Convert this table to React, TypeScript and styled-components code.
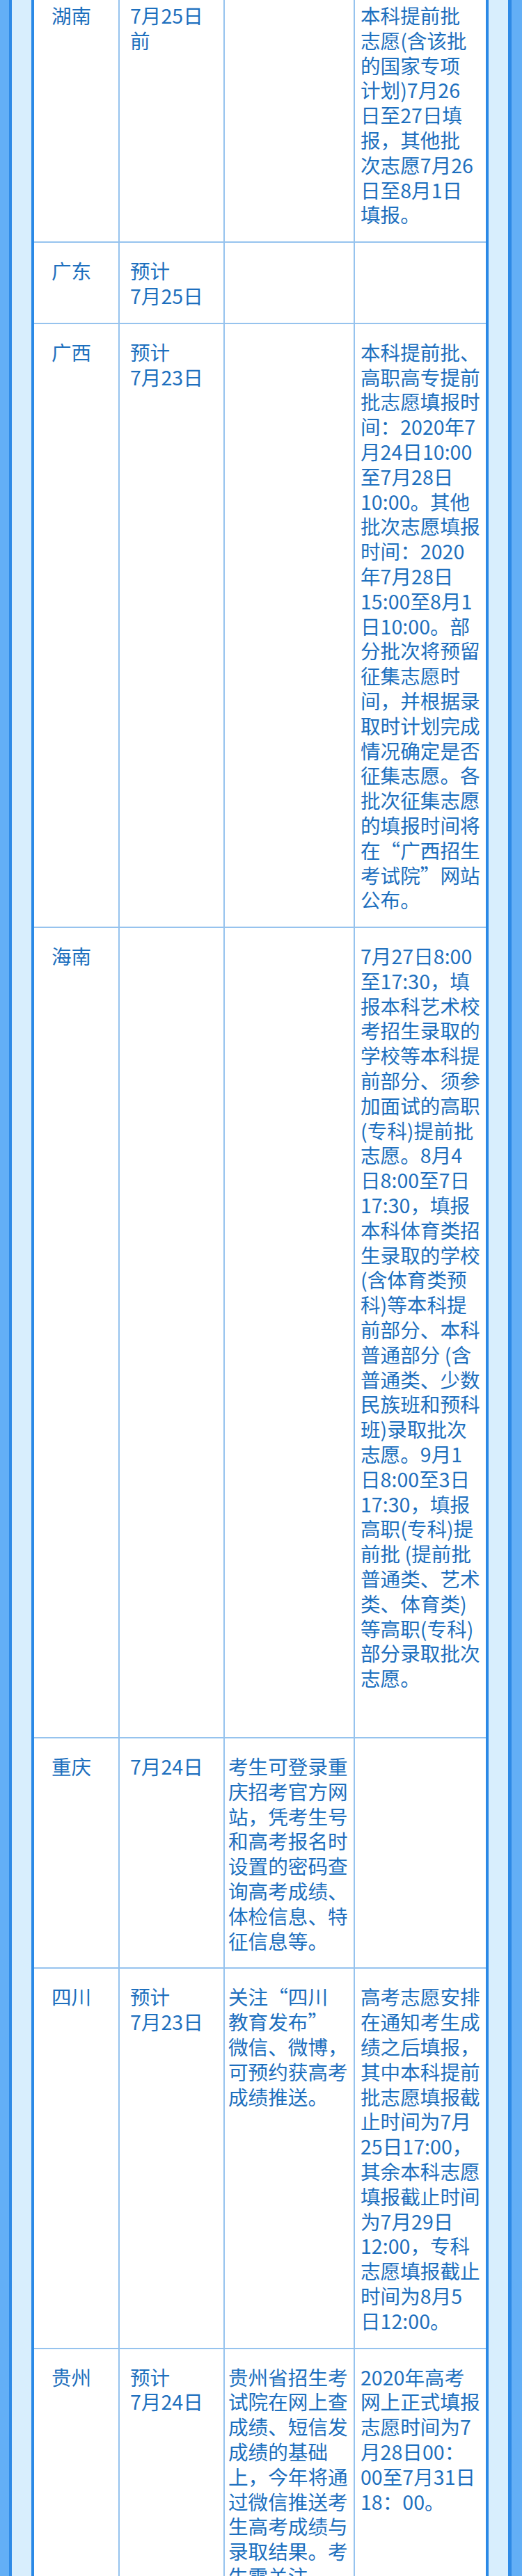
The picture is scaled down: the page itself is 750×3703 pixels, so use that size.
import React from 'react';
import styled, {createGlobalStyle} from 'styled-components';

const GlobalStyle = createGlobalStyle`
    html, body {
        margin: 0;
        padding: 0;
        overflow: hidden;
    }
    body {
        background: #63aff6;
        font-family: "Noto Sans CJK SC", "Noto Sans", sans-serif;
    }
`

type Province = {
    name: string;
    date: string[];
    query: string[];
    fill: string[];
    extraBottom?: number;
};

const provinces: Province[] = [
    {
        name: '湖南',
        date: ['7月25日', '前'],
        query: [],
        fill: ['本科提前批', '志愿(含该批', '的国家专项', '计划)7月26', '日至27日填', '报，其他批', '次志愿7月26', '日至8月1日', '填报。'],
    },
    {
        name: '广东',
        date: ['预计', '7月25日'],
        query: [],
        fill: [],
    },
    {
        name: '广西',
        date: ['预计', '7月23日'],
        query: [],
        fill: ['本科提前批、', '高职高专提前', '批志愿填报时', '间：2020年7', '月24日10:00', '至7月28日', '10:00。其他',
            '批次志愿填报', '时间：2020', '年7月28日', '15:00至8月1', '日10:00。部', '分批次将预留', '征集志愿时',
            '间，并根据录', '取时计划完成', '情况确定是否', '征集志愿。各', '批次征集志愿', '的填报时间将',
            '在“广西招生', '考试院”网站', '公布。'],
    },
    {
        name: '海南',
        date: [],
        query: [],
        fill: ['7月27日8:00', '至17:30，填', '报本科艺术校', '考招生录取的', '学校等本科提', '前部分、须参',
            '加面试的高职', '(专科)提前批', '志愿。8月4', '日8:00至7日', '17:30，填报', '本科体育类招',
            '生录取的学校', '(含体育类预', '科)等本科提', '前部分、本科', '普通部分 (含', '普通类、少数',
            '民族班和预科', '班)录取批次', '志愿。9月1', '日8:00至3日', '17:30，填报', '高职(专科)提',
            '前批 (提前批', '普通类、艺术', '类、体育类)', '等高职(专科)', '部分录取批次', '志愿。'],
        extraBottom: 46,
    },
    {
        name: '重庆',
        date: ['7月24日'],
        query: ['考生可登录重', '庆招考官方网', '站，凭考生号', '和高考报名时', '设置的密码查', '询高考成绩、',
            '体检信息、特', '征信息等。'],
        fill: [],
    },
    {
        name: '四川',
        date: ['预计', '7月23日'],
        query: ['关注“四川', '教育发布”', '微信、微博，', '可预约获高考', '成绩推送。'],
        fill: ['高考志愿安排', '在通知考生成', '绩之后填报，', '其中本科提前', '批志愿填报截', '止时间为7月',
            '25日17:00，', '其余本科志愿', '填报截止时间', '为7月29日', '12:00，专科', '志愿填报截止',
            '时间为8月5', '日12:00。'],
    },
    {
        name: '贵州',
        date: ['预计', '7月24日'],
        query: ['贵州省招生考', '试院在网上查', '成绩、短信发', '成绩的基础', '上，今年将通', '过微信推送考',
            '生高考成绩与', '录取结果。考', '生需关注', '“贵州招生考', '试院”微信', '公众号。'],
        fill: ['2020年高考', '网上正式填报', '志愿时间为7', '月28日00：', '00至7月31日', '18：00。'],
    },
];

const Lines: React.FC<{ lines: string[] }> = ({lines}) => (
    <>
        {lines.map((line, i) => <Line key={i}>{line}</Line>)}
    </>
);

export default function App() {
    return <Page lang="zh-CN">
        <GlobalStyle/>
        <Frame>
            <Table>
                {provinces.map((p) => (
                    <Row key={p.name} $extraBottom={p.extraBottom ?? 0}>
                        <Cell $indent={25}><Line>{p.name}</Line></Cell>
                        <Cell $indent={15}><Lines lines={p.date}/></Cell>
                        <Cell $indent={5}><Lines lines={p.query}/></Cell>
                        <Cell $indent={8}><Lines lines={p.fill}/></Cell>
                    </Row>
                ))}
            </Table>
        </Frame>
    </Page>
}

const Page = styled.div`
    padding: 0 15px 0 13px;
    background: #63aff6;
`

const Frame = styled.div`
    margin-top: -22px;
    padding: 0 28px;
    background: #d8eefd;
    border-left: 4px solid #2e8ae6;
    border-right: 5px solid #2e8ae6;
`

const Table = styled.div`
    background: #ffffff;
    border: 4px solid #2a89e6;
    border-bottom: none;
`

const Row = styled.div<{ $extraBottom: number }>`
    display: grid;
    grid-template-columns: 123px 151px 187px 1fr;
    border-top: 2px solid #96c3ee;

    &:first-child {
        border-top: none;
    }

    & > div {
        padding-bottom: ${p => 21 + p.$extraBottom}px;
    }
`

const Cell = styled.div<{ $indent: number }>`
    padding: 22px 0 21px ${p => p.$indent}px;
    border-right: 2px solid #96c3ee;
    color: #1d6fbe;
    font-size: 28.6px;
    line-height: 35.8px;

    &:last-child {
        border-right: none;
    }
`

const Line = styled.span`
    display: block;
    white-space: nowrap;
`
